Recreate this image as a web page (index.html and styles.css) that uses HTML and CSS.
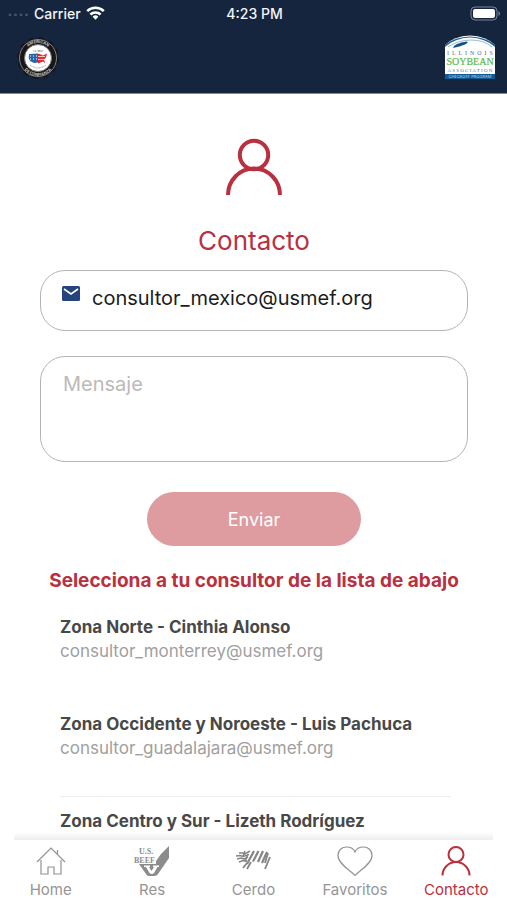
FILE: index.html
```html
<!DOCTYPE html>
<html lang="es">
<head>
<meta charset="utf-8">
<meta name="viewport" content="width=device-width, initial-scale=1">
<title>Contacto</title>
<link rel="stylesheet" href="styles.css">
</head>
<body>
<div class="app">
  <header class="header">
    <div class="status">
      <div class="carrier">
        <svg width="21" height="6" viewBox="0 0 21 6" fill="#46546b" aria-hidden="true"><circle cx="2" cy="5" r="1.400"/><circle cx="7.500" cy="5" r="1.400"/><circle cx="13" cy="5" r="1.400"/><circle cx="18.500" cy="5" r="1.400"/></svg>
        <span>Carrier</span>
        <svg width="19" height="14" viewBox="0 0 19 14" fill="none" stroke="#fff" stroke-width="2.5" aria-hidden="true"><path d="M1.2 5.2a11.8 11.8 0 0 1 16.6 0M4.4 8.5a7.2 7.2 0 0 1 10.2 0"/><path d="M6.6 10.7a4.1 4.1 0 0 1 5.8 0L9.500 13.700z" fill="#fff" stroke="none"/></svg>
      </div>
      <time>4:23 PM</time>
      <svg class="battery" width="31" height="15" viewBox="0 0 31 15" aria-hidden="true"><rect x="1" y="1" width="26" height="13" rx="4" fill="none" stroke="#79849a"/><rect x="3" y="3" width="22" height="9" rx="2" fill="#fff"/><path d="M28.500 5v5q1.500-.7 1.500-2.500t-1.500-2.500" fill="#79849a"/></svg>
    </div>
    <div class="brands">
      <svg width="42" height="46" viewBox="0 0 42 46" role="img" aria-label="U.S. Meat">
        <defs>
          <path id="ring-top" d="M6 23a15 15 0 0 1 30 0"/>
          <path id="ring-bottom" d="M3 23a18 18 0 0 0 36 0"/>
        </defs>
        <circle cx="21" cy="23" r="19.500" fill="#17161a"/>
        <circle cx="21" cy="23" r="19.500" fill="none" stroke="#17161a" stroke-width="3" stroke-dasharray="5 5.210"/>
        <circle cx="21" cy="23" r="18.500" fill="none" stroke="#85817d" stroke-width="1"/>
        <circle cx="21" cy="23" r="13.500" fill="#fff" stroke="#77736f"/>
        <text class="seal-text" fill="#c9c5c0"><textPath href="#ring-top" startOffset="50%" text-anchor="middle">AMERICAN</textPath></text>
        <text class="seal-text" fill="#c9c5c0"><textPath href="#ring-bottom" startOffset="50%" text-anchor="middle">DE CONFIANZA</textPath></text>
        <text class="seal-inner" fill="#333" x="21" y="16.500" text-anchor="middle">U.S. MEAT</text>
        <path d="M12 19l9-.5v9l-4 .5-4-2q-2-3-1-7z" fill="#2565aa"/>
        <path d="M21 18.500l3 1 2 1 4-2-1 4-2 2 1 4-2-2-5 2z" fill="#df2c35"/>
        <path d="M21 21.500h7M21 24.500h6" stroke="#fff" stroke-width=".7"/>
        <path d="M13 21h7M13 24h7" stroke="#fff" stroke-dasharray="1 2"/>
        <path d="M13 30q8 6 16 0" fill="none" stroke="#999" stroke-dasharray="1 .6"/>
      </svg>
      <svg width="50" height="44" viewBox="0 0 50 44" role="img" aria-label="Illinois Soybean Association Checkoff Program">
        <path d="M0 10Q9 1 25 .5 41 1 50 10v34H0z" fill="#fff"/>
        <path d="M0 12Q10 3 25 2.500 40 3 50 12v-2.500Q40 2 25 1.500 10 2 0 9.500z" fill="#236293"/>
        <path d="M3 12Q13 5 26 5q13 0 21 7" fill="none" stroke="#9bb8ce"/>
        <path d="M8 13q1-5 14-6.500 2 1-2 3-5 2-12 3.500z" fill="#155387"/>
        <text class="soy-small" x="25" y="20" text-anchor="middle">I  L  L  I  N  O  I  S</text>
        <text class="soy-name" x="25" y="30" text-anchor="middle">SOYBEAN</text>
        <text class="soy-line" x="25" y="37" text-anchor="middle">A S S O C I A T I O N</text>
        <path d="M0 39h50v5H0z" fill="#105b96"/>
        <text class="soy-program" x="25" y="43" text-anchor="middle">CHECKOFF PROGRAM</text>
      </svg>
    </div>
  </header>

  <main class="content">
    <svg class="hero" width="58" height="58" viewBox="0 0 58 58" fill="none" stroke="#b9303e" stroke-width="4" aria-hidden="true"><circle cx="29" cy="17" r="14.200"/><path d="M3 57A26 26.500 0 0 1 55 57"/></svg>
    <h1>Contacto</h1>
    <form class="form">
      <label class="field">
        <svg width="18" height="15" viewBox="0 0 18 15" role="img" aria-label="Correo"><rect width="18" height="15" rx="1.500" fill="#25447c"/><path d="M2 3l7 5 7-5" fill="none" stroke="#fff" stroke-width="1.600"/></svg>
        <input type="email" value="consultor_mexico@usmef.org">
      </label>
      <textarea aria-label="Mensaje" placeholder="Mensaje"></textarea>
      <button type="button">Enviar</button>
    </form>
    <h2>Selecciona a tu consultor de la lista de abajo</h2>
    <ul class="consultants">
      <li><h3>Zona Norte - Cinthia Alonso</h3><p>consultor_monterrey@usmef.org</p></li>
      <li class="divided"><h3>Zona Occidente y Noroeste - Luis Pachuca</h3><p>consultor_guadalajara@usmef.org</p></li>
      <li><h3>Zona Centro y Sur - Lizeth Rodríguez</h3></li>
    </ul>
  </main>

  <nav class="tabs">
    <a href="#home">
      <svg width="30" height="30" viewBox="0 0 30 30" fill="none" stroke="#929292" stroke-width="1.200" aria-hidden="true"><path d="M1 16L15 2l14 14M5 14v14h7v-7h6v7h7V14M21.500 8V4"/></svg>
      <span>Home</span>
    </a>
    <a href="#res">
      <svg width="36" height="31" viewBox="0 0 36 31" fill="#8c8c8c" aria-hidden="true"><path d="M35 0v12L24 28q-1 2-4 2h-5q-2 0-3-2L5 18h17v-3l5-7z"/><path d="M10 19.500h6v1.500h-1l2.500 4 2.500-4h-1v-1.500h6V21h-1.500l-3.500 6q-2 2-4.500 0L12 21h-2z" fill="#fff"/><text class="beef-us" x="5" y="8">U.S.</text><text class="beef-name" x="0" y="17">BEEF</text></svg>
      <span>Res</span>
    </a>
    <a href="#cerdo">
      <svg width="36" height="30" viewBox="0 0 36 30" fill="none" stroke="#858585" aria-hidden="true"><path stroke-width="2.200" d="M19 5l-7 13M23.500 5L18 15.500M28 5l-5 11M32 6l-5 11"/><path stroke-width="1.800" d="M35 11l-5 12M16 16l-4 7M12 17l-4 5M33 7l-3 10"/><path stroke-width="1.500" d="M4 7h4l2 1 5-3M1 10l4-.5 3 1 6-2M2 13l4-1 3 1 4-2M4 16l4-1.500 4 .5M10 5l-2 5M13 8l-3 8"/></svg>
      <span>Cerdo</span>
    </a>
    <a href="#favoritos">
      <svg width="36" height="30" viewBox="0 0 36 30" fill="none" stroke="#929292" stroke-width="1.200" aria-hidden="true"><path d="M18 29.300C14 25 1 18 1 9.500 1 4 5 1 9.500 1 14 1 17 3.500 18 6c1-2.500 4-5 8.500-5C31 1 35 4 35 9.500 35 18 22 25 18 29.300z"/></svg>
      <span>Favoritos</span>
    </a>
    <a href="#contacto" class="active" aria-current="page">
      <svg width="30" height="30" viewBox="0 0 30 30" fill="none" stroke="#b9303e" stroke-width="2" aria-hidden="true"><circle cx="15" cy="8.500" r="7.500"/><path d="M1.500 29.500A13.500 13.500 0 0 1 28.500 29.500"/></svg>
      <span>Contacto</span>
    </a>
  </nav>
</div>
</body>
</html>
```
FILE: styles.css
```css
* {
  box-sizing: border-box;
}

body {
  margin: 0;
  font-family: Inter, "Liberation Sans", sans-serif;
  background: #fff;
}

h1,
h2,
h3,
p,
ul {
  margin: 0;
  padding: 0;
}

svg {
  display: block;
  flex: none;
}

.app {
  display: flex;
  flex-direction: column;
  height: 100vh;
}

.header {
  flex: none;
  padding-bottom: 12px;
  background: #15253e;
  border-bottom: 1px solid #7e8d9b;
}

.status {
  display: grid;
  grid-template-columns: 1fr auto 1fr;
  align-items: center;
  height: 26px;
  padding: 0 6px 0 8px;
  color: #f3f5f8;
  font-size: 14px;
  font-weight: 500;
}

.carrier {
  display: flex;
  align-items: center;
  gap: 5px;
}

.battery {
  justify-self: end;
}

.brands {
  display: flex;
  justify-content: space-between;
  align-items: flex-start;
  padding: 9px 12px 0 17px;
}

.seal-text {
  font-size: 4px;
  font-weight: 700;
}

.seal-inner {
  font-size: 2px;
}

.soy-small,
.soy-line {
  font-family: "Liberation Serif", serif;
  font-size: 6px;
  fill: #536b91;
  white-space: pre;
}

.soy-line {
  font-size: 5px;
}

.soy-name {
  font-family: "Liberation Serif", serif;
  font-size: 10px;
  fill: #59b94c;
  stroke: #59b94c;
  stroke-width: 0.2px;
}

.soy-program {
  font-size: 4px;
  fill: #c2d9e9;
}

.content {
  display: flex;
  flex: 1;
  flex-direction: column;
  align-items: center;
  min-height: 0;
  padding: 44px 39px 0 40px;
  overflow: hidden;
}

.content > * {
  flex: none;
}

h1 {
  margin-top: 28px;
  color: #b9303e;
  font-size: 26px;
  font-weight: 400;
  line-height: 34px;
}

.form {
  display: flex;
  flex-direction: column;
  align-items: center;
  width: 100%;
  margin-top: 12px;
}

.field,
textarea {
  width: 100%;
  border: 1px solid #b4b4b4;
  border-radius: 25px;
  background: #fff;
}

.field {
  display: flex;
  align-items: flex-start;
  gap: 12px;
  height: 61px;
  padding: 15px 21px;
}

input {
  flex: 1;
  min-width: 0;
  height: 24px;
  padding: 0;
  border: 0;
  color: #1c1c1c;
  background: none;
  font: 400 20px/24px Inter, "Liberation Sans", sans-serif;
}

textarea {
  display: block;
  height: 106px;
  margin-top: 25px;
  padding: 15px 22px;
  font: 400 20px/24px Inter, "Liberation Sans", sans-serif;
  resize: none;
}

textarea::placeholder {
  color: #bdb9b9;
}

button {
  width: 50%;
  height: 54px;
  margin-top: 30px;
  padding-top: 2px;
  border: 0;
  border-radius: 27px;
  background: #de9ca0;
  color: #fff;
  font: 400 18px/24px Inter, "Liberation Sans", sans-serif;
}

h2 {
  margin-top: 23px;
  color: #b9303e;
  font-size: 19px;
  font-weight: 700;
  line-height: 24px;
  white-space: nowrap;
}

.consultants {
  width: 100%;
  margin-top: 10px;
  padding: 0 17px 0 20px;
  list-style: none;
}

.consultants li {
  height: 97px;
  padding-top: 12px;
  border-bottom: 1px solid transparent;
}

.consultants .divided {
  border-color: #eee;
}

h3,
.consultants p {
  font-size: 17px;
  line-height: 24px;
  white-space: nowrap;
}

h3 {
  color: #484848;
  font-weight: 700;
}

.consultants p {
  color: #a0a0a0;
}

.tabs {
  position: relative;
  display: grid;
  flex: none;
  grid-template-columns: repeat(5, 1fr);
  height: 62px;
  padding-top: 8px;
  background: #fff;
}

.tabs::before {
  position: absolute;
  right: 14px;
  bottom: 100%;
  left: 14px;
  height: 8px;
  margin-bottom: -2px;
  background: linear-gradient(transparent, #eee);
  content: "";
}

.tabs a {
  display: grid;
  grid-template-rows: 31px 18px;
  align-content: start;
  justify-items: center;
  gap: 4px;
  color: #959595;
  font-size: 15px;
  line-height: 18px;
  text-decoration: none;
}

.tabs .active {
  color: #b9303e;
}

.beef-us,
.beef-name {
  font-family: "Liberation Serif", serif;
  font-size: 8px;
  font-weight: 700;
  stroke: #fff;
  stroke-width: 1px;
  paint-order: stroke;
}
```
